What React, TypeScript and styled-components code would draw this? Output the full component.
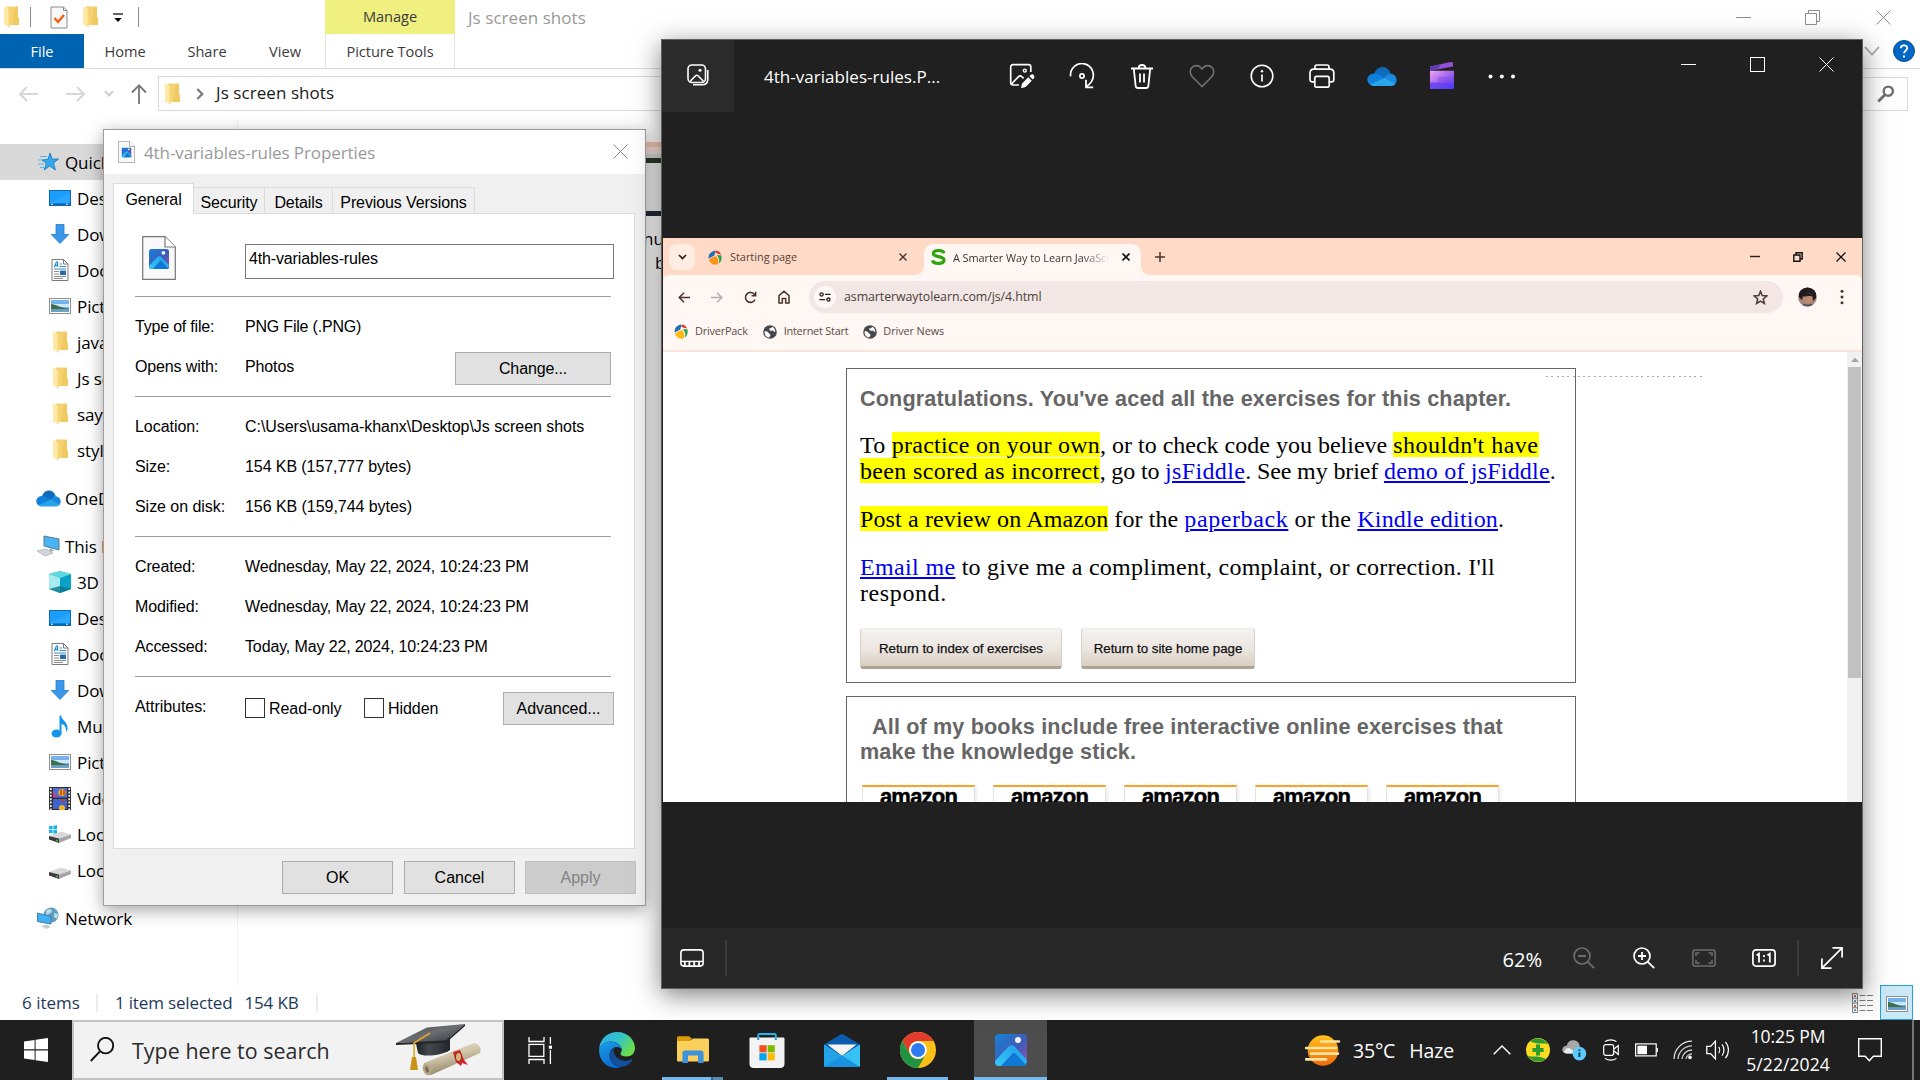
import React from "react";
import styled, { createGlobalStyle } from "styled-components";

const UI = `"Segoe UI", "Open Sans", "Noto Sans", sans-serif`;
const SANS = `"Liberation Sans", Arial, sans-serif`;
const SERIF = `"Liberation Serif", Georgia, serif`;

const Global = createGlobalStyle`
  * { box-sizing: border-box; }
  body { margin: 0; background: #fff; overflow: hidden; }
  svg { display: block; flex: none; }
`;

const Desktop = styled.div`
  position: relative;
  width: 1920px;
  height: 1080px;
  overflow: hidden;
  display: flex;
  flex-direction: column;
  font-family: ${UI};
  color: #000;
`;

const Label = styled.span<{ $size?: number; $ls?: number; $color?: string; $ml?: number; $mt?: number }>`
  font-size: ${(p) => p.$size ?? 17}px;
  letter-spacing: ${(p) => p.$ls ?? 0}px;
  color: ${(p) => p.$color ?? "inherit"};
  margin-left: ${(p) => p.$ml ?? 0}px;
  margin-top: ${(p) => p.$mt ?? 0}px;
  white-space: pre;
  line-height: 1.3;
  flex: none;
`;

const Slot = styled.div<{ $w: number; $h?: number; $ml?: number }>`
  width: ${(p) => p.$w}px;
  height: ${(p) => (p.$h ? p.$h + "px" : "100%")};
  margin-left: ${(p) => p.$ml ?? 0}px;
  display: flex;
  flex: none;
  align-items: center;
  justify-content: center;
`;

const Rule = styled.div<{ $h: number; $ml?: number; $color?: string; $w?: number }>`
  width: ${(p) => p.$w ?? 1}px;
  height: ${(p) => p.$h}px;
  margin-left: ${(p) => p.$ml ?? 0}px;
  background: ${(p) => p.$color ?? "#8a8a8a"};
  flex: none;
`;

/* ---------- icons ---------- */
type IP = { w: number; h: number; vb?: string; children: React.ReactNode };
const I = ({ w, h, vb, children }: IP) => (
  <svg width={w} height={h} viewBox={vb ?? `0 0 ${w} ${h}`} fill="none">
    {children}
  </svg>
);

const FolderIcon = () => (
  <I w={15} h={22}>
    <path d="M3 0.5H14V11L15 12V19H3Z" fill="#f6d370" />
    <path d="M11 1H14V11L15 12V19H8Z" fill="#e9c25a" opacity=".55" />
    <path d="M0 0.5L5.5 3.5V21.5L0 18.5Z" fill="#ffe9a6" />
    <path d="M5.5 3.5V21.5L4.6 21V3Z" fill="#f3cf72" />
  </I>
);
const CheckDoc = () => (
  <I w={18} h={23}>
    <path d="M1 1H13.5L17 4.5V22H1Z" fill="#f8f8f8" stroke="#8a8a8a" />
    <path d="M13.5 1V4.5H17" stroke="#8a8a8a" />
    <path d="M4.5 12L8 16L14 9" stroke="#f2600c" strokeWidth="2.4" />
  </I>
);
const StarIcon = () => (
  <I w={22} h={20}>
    <path d="M13 1L15.2 7H21.5L16.6 11L18.4 18L12.7 14L7.2 18L9.3 11.3L5 8L11 7.3Z" fill="#33a9ee" stroke="#1477bd" strokeWidth=".8" />
    <path d="M3 4.5H10M1 8H5M1 12H7M3 15.5H7" stroke="#5ab4ec" strokeWidth="1" />
  </I>
);
const DesktopIcon = () => (
  <I w={22} h={16}>
    <rect x=".5" y=".5" width="21" height="15" fill="#1a9dfb" stroke="#0c6ab3" />
    <path d="M1 13L21 3V13Z" fill="#3cb0ff" opacity=".5" />
    <path d="M1 14.2H21" stroke="#0b5fa5" strokeWidth="1.4" />
    <path d="M2 14.2H4M17 14.2H19" stroke="#fff" strokeWidth="1" />
  </I>
);
const DownIcon = () => (
  <I w={20} h={20}>
    <path d="M6 .5H14V10.5H18.8L10 19.5L1.2 10.5H6Z" fill="#3b97e8" stroke="#2b7bc9" strokeWidth=".8" />
  </I>
);
const DocIcon = () => (
  <I w={18} h={22}>
    <path d="M1 .5H12.5L17 5V21.5H1Z" fill="#fff" stroke="#7a7a7a" />
    <path d="M12.5 .5V5H17" stroke="#7a7a7a" />
    <path d="M3.4 8L5.4 3H6.6V8M4 6.4H6.6" stroke="#1e88d2" strokeWidth="1.1" />
    <path d="M8.5 5H11M8.5 7.5H15M3 10H15" stroke="#2f8fce" strokeWidth="1" />
    <path d="M3 12.5H8M3 15H8M3 17.5H15M3 19.5H12" stroke="#8c8c8c" strokeWidth="1" />
    <rect x="9" y="11.6" width="6" height="4.4" fill="#2a6aa9" />
  </I>
);
const PicIcon = () => (
  <I w={22} h={16}>
    <rect x=".5" y=".5" width="21" height="15" fill="#fff" stroke="#8e8e8e" />
    <rect x="2" y="2" width="18" height="12" fill="#74b3ee" />
    <rect x="2" y="6" width="18" height="3" fill="#cfe6f7" />
    <path d="M2 6C7 6 10 10 20 10.5V11.5H2Z" fill="#3f6f4e" />
    <path d="M2 11.3H20V14H2Z" fill="#6ba2c6" />
  </I>
);
const CloudIcon = ({ w = 25, h = 17 }: { w?: number; h?: number }) => (
  <I w={w} h={h} vb="0 0 25 17">
    <path d="M6 6.5C7 2.5 10 .5 13 .5C16.5 .5 18.8 3 19.6 6L12 12Z" fill="#0f6cbd" />
    <path d="M5.5 6C2.5 6.4 .3 8.5 .3 11.2C.3 13.6 2 15.6 4.5 16.2L15 10.5C12 7.5 9 5.7 5.5 6Z" fill="#1180dd" />
    <path d="M14 10C16 7 18 6 20 6.2C23 6.6 24.7 9 24.7 11.5C24.7 13 24 14.5 23 15.2Z" fill="#1a8ae0" />
    <path d="M3 15L14.5 9.8L23.6 14.6C22.8 16 21.5 16.5 20 16.5H5.5C4.5 16.5 3.6 16 3 15Z" fill="#2aa5ea" />
  </I>
);
const PCIcon = () => (
  <I w={23} h={22}>
    <path d="M7 1L22 4V15L7 11Z" fill="#46b4f5" stroke="#5d7b8f" />
    <path d="M13 13L17 16L12 17Z" fill="#98a5ad" />
    <path d="M0 16L9 14L16 18L8 21Z" fill="#cfd5d9" stroke="#9aa5ac" strokeWidth=".6" />
  </I>
);
const CubeIcon = () => (
  <I w={22} h={22}>
    <path d="M11 0L22 3V18L11 22L0 18V3Z" fill="#3fc7d6" />
    <path d="M0 3L11 7V22L0 18Z" fill="#a6ecf0" />
    <path d="M22 3L11 7V22L22 18Z" fill="#0ba1c5" />
    <path d="M11 15L22 18L11 22L0 18Z" fill="#08758c" opacity=".8" />
    <path d="M0 3L11 0L22 3L11 7Z" fill="#5fd7df" />
  </I>
);
const MusicIcon = () => (
  <I w={18} h={23}>
    <ellipse cx="5.5" cy="18.5" rx="5" ry="4" fill="#1296ec" />
    <path d="M8.5 18.5V.5H10C10.5 5 17 7 16.6 14C16 16 15.5 16.5 15 17C15.5 11.5 13 9.5 10.5 9V18.5Z" fill="#1296ec" />
  </I>
);
const VideoIcon = () => (
  <I w={22} h={23}>
    <rect width="22" height="23" fill="#2e2e2e" />
    <rect x="4" y="1" width="14" height="9.6" fill="#4e6fd6" />
    <rect x="4" y="12" width="14" height="10" fill="#3e63cf" />
    <circle cx="13" cy="5.5" r="3.6" fill="#f3b51d" />
    <path d="M12 2.5V8.5M15 3V8" stroke="#b0231c" strokeWidth="1.2" />
    <path d="M4 4L9 10H4Z" fill="#d13c8e" />
    <path d="M14 15L17 12.6H11Z" fill="#cf3a1d" />
    <circle cx="13" cy="21" r="3" fill="#f3b51d" />
    <path d="M1.8 1V23M20.2 1V23" stroke="#e8e8e8" strokeWidth="1.8" strokeDasharray="2 1.4" />
  </I>
);
const DriveIcon = ({ win }: { win?: boolean }) => (
  <I w={22} h={18}>
    {win && <path d="M0 1.2L3.6 .8V4.2H0ZM4.4 .7L8 .2V4.2H4.4ZM0 5H3.6V8.3L0 8ZM4.4 5H8V8.8L4.4 8.4Z" fill="#17b1ee" />}
    <path d="M0 11L12 6.5L22 9.5L10 13.5Z" fill="#d8d8da" />
    <path d="M0 11L10 13.5V18L0 14.5Z" fill="#3c3c3c" />
    <path d="M10 13.5L22 9.5V13L10 18Z" fill="#a6a6a9" />
    <circle cx="8" cy="15.6" r="1" fill="#42c24a" />
  </I>
);
const NetIcon = () => (
  <I w={22} h={22}>
    <circle cx="14" cy="8" r="7.6" fill="#5e9dc0" />
    <path d="M9 4C11 1 14 2 15 4C14 7 11 6 10 9ZM17 6L21 7L20 12L17 10Z" fill="#b9dcec" />
    <path d="M.5 6L14 9.5V17L.5 14.5Z" fill="#3eb0f6" stroke="#4a7f9f" />
    <path d="M4 19L10 17.5L14 20L9 22Z" fill="#c5ccd0" />
  </I>
);

const XMark = ({ s, color, sw = 1 }: { s: number; color: string; sw?: number }) => (
  <I w={s} h={s}>
    <path d={`M.5 .5L${s - 0.5} ${s - 0.5}M${s - 0.5} .5L.5 ${s - 0.5}`} stroke={color} strokeWidth={sw} />
  </I>
);
const Dash = ({ w, color, sw = 1 }: { w: number; color: string; sw?: number }) => (
  <I w={w} h={3}>
    <path d={`M0 1.5H${w}`} stroke={color} strokeWidth={sw} />
  </I>
);

const PhotoGlyph = ({ s, id }: { s: number; id: string }) => (
  <I w={s} h={s} vb="0 0 32 32">
    <defs>
      <linearGradient id={id} x1="0" y1="0" x2="1" y2="1">
        <stop offset="0" stopColor="#1583d8" />
        <stop offset=".55" stopColor="#3f5bb8" />
        <stop offset="1" stopColor="#9a4fb4" />
      </linearGradient>
      <linearGradient id={id + "b"} x1="0" y1="1" x2="1" y2="0">
        <stop offset="0" stopColor="#35c8fa" />
        <stop offset="1" stopColor="#1e9be9" />
      </linearGradient>
      <clipPath id={id + "c"}>
        <rect width="32" height="32" rx="4" />
      </clipPath>
    </defs>
    <g clipPath={`url(#${id}c)`}>
      <rect width="32" height="32" fill={`url(#${id})`} />
      <path d="M6 32L21 16L33 28V32Z" fill="#0f78d4" />
      <path d="M0 27L13 13C15.5 10.5 18 10.5 20 13L33 27L30 30L21 20C20 18.5 18 18.5 17 20L6 32H0Z" fill={`url(#${id}b)`} />
      <circle cx="23" cy="6" r="3" fill="#f4f4f8" />
    </g>
  </I>
);

const FileGlyph = ({ w, h, id }: { w: number; h: number; id: string }) => (
  <I w={w} h={h} vb="0 0 34 44">
    <path d="M.7 .7H23L33.3 11V43.3H.7Z" fill="#f9f9f9" stroke="#777" strokeWidth="1.2" />
    <path d="M23 .7V11H33.3" fill="#fff" stroke="#777" strokeWidth="1.2" />
    <g transform="translate(7 13)">
      <PhotoGlyph s={20} id={id} />
    </g>
  </I>
);

/* ---------- file explorer ---------- */
const Explorer = styled.div`
  height: 1020px;
  width: 1920px;
  display: flex;
  flex-direction: column;
  background: #fff;
`;
const RibbonTop = styled.div`
  height: 69px;
  display: flex;
  border-bottom: 1px solid #dadbdc;
`;
const RibbonLeft = styled.div`
  width: 325px;
  display: flex;
  flex-direction: column;
`;
const QuickBar = styled.div`
  height: 34px;
  display: flex;
  align-items: center;
  padding: 0 0 0 4px;
`;
const Tabs = styled.div`
  height: 34px;
  display: flex;
  align-items: center;
  font-size: 14.6px;
  color: #3b3b3b;
`;
const FileTab = styled.div`
  width: 84px;
  height: 34px;
  line-height: 34px;
  text-align: center;
  background: #0063b1;
  color: #fff;
`;
const Tab = styled.div<{ $w: number }>`
  width: ${(p) => p.$w}px;
  text-align: center;
  line-height: 34px;
`;
const ToolTab = styled.div`
  width: 130px;
  text-align: center;
  font-size: 14.6px;
  letter-spacing: -0.05px;
  color: #3b3b3b;
  line-height: 33px;
`;
const ToolHead = styled.div`
  height: 34px;
  background: #f0f080;
`;
const ToolName = styled.div`
  height: 34px;
  line-height: 34px;
  border: solid #e1e2e3;
  border-width: 0 1px;
`;
const TitleArea = styled.div`
  flex: 1;
  display: flex;
  flex-direction: column;
`;
const TitleLine = styled.div`
  height: 34px;
  display: flex;
  align-items: center;
  justify-content: space-between;
  padding: 0 1px 0 13px;
`;
const Controls = styled.div`
  display: flex;
  height: 33px;
`;
const HelpLine = styled.div`
  height: 34px;
  display: flex;
  align-items: center;
  justify-content: flex-end;
  gap: 13px;
  padding-right: 5px;
`;
const AddressRow = styled.div`
  height: 51px;
  display: flex;
  align-items: center;
  padding: 0 12px 2px 19px;
`;
const AddressBox = styled.div`
  margin-left: 11px;
  width: 1200px;
  height: 35px;
  border: 1px solid #d9d9d9;
  display: flex;
  align-items: center;
  padding-left: 6px;
`;
const SearchBox = styled.div`
  flex: 1;
  margin-left: 12px;
  height: 34px;
  border: 1px solid #d9d9d9;
  display: flex;
  align-items: center;
  justify-content: flex-end;
  padding-right: 12px;
`;
const Body = styled.div`
  flex: 1;
  display: flex;
  min-height: 0;
`;
const NavPane = styled.div`
  width: 238px;
  height: 865px;
  border-right: 1px solid #f0f0f0;
  padding-top: 24px;
  display: flex;
  flex-direction: column;
  gap: 12px;
`;
const NavGroup = styled.div``;
const NavItem = styled.div<{ $sub?: boolean; $sel?: boolean }>`
  height: 36px;
  display: flex;
  align-items: center;
  padding-left: ${(p) => (p.$sub ? 45 : 33)}px;
  background: ${(p) => (p.$sel ? "#d9d9d9" : "transparent")};
  font-size: 17px;
  letter-spacing: -0.1px;
  white-space: nowrap;
`;
const NavIcon = styled.div`
  width: 30px;
  margin-right: 2px;
  display: flex;
  justify-content: center;
`;
const FilePane = styled.div`
  flex: 1;
  padding: 22px 0 0 405px;
`;
const Thumb = styled.div`
  width: 60px;
  height: 74px;
  background: linear-gradient(#f9cbb3 0 5px, #f8e3df 5px 12px, #d5dcd6 12px 16px, #2c3a28 16px 21px, #f2f2f2 21px 69px, #222b33 69px 74px);
`;
const ThumbName = styled.div`
  font-size: 17px;
  line-height: 24px;
  padding-top: 11px;
  width: 60px;
`;
const ThumbTail = styled.div`
  padding-left: 12px;
`;
const StatusBar = styled.div`
  height: 35px;
  display: flex;
  align-items: center;
  padding: 0 7px 0 22px;
  color: #1e395b;
`;
const ViewButtons = styled.div`
  margin-left: auto;
  display: flex;
  align-items: center;
  gap: 7px;
`;
const ViewSelected = styled.div`
  width: 33px;
  height: 35px;
  border: 1px solid #26a0da;
  background: #cbe8f6;
  display: flex;
  justify-content: flex-end;
  align-items: center;
  padding: 3px 4px 0 0;
`;

const nav: { items: [string, React.ReactNode, boolean?][] }[] = [
  {
    items: [
      ["Quick access", <StarIcon />],
      ["Desktop", <DesktopIcon />, true],
      ["Downloads", <DownIcon />, true],
      ["Documents", <DocIcon />, true],
      ["Pictures", <PicIcon />, true],
      ["javascript", <FolderIcon />, true],
      ["Js screen shots", <FolderIcon />, true],
      ["say", <FolderIcon />, true],
      ["style", <FolderIcon />, true],
    ],
  },
  { items: [["OneDrive", <CloudIcon />]] },
  {
    items: [
      ["This PC", <PCIcon />],
      ["3D Objects", <CubeIcon />, true],
      ["Desktop", <DesktopIcon />, true],
      ["Documents", <DocIcon />, true],
      ["Downloads", <DownIcon />, true],
      ["Music", <MusicIcon />, true],
      ["Pictures", <PicIcon />, true],
      ["Videos", <VideoIcon />, true],
      ["Local Disk", <DriveIcon win />, true],
      ["Local Disk", <DriveIcon />, true],
    ],
  },
  { items: [["Network", <NetIcon />]] },
];

const ExplorerWindow = () => (
  <Explorer>
    <RibbonTop>
      <RibbonLeft>
        <QuickBar>
          <FolderIcon />
          <Rule $h={20} $ml={11} />
          <Slot $w={18} $ml={19}><CheckDoc /></Slot>
          <Slot $w={15} $ml={15}><FolderIcon /></Slot>
          <Slot $w={10} $ml={15}>
            <I w={10} h={10}>
              <path d="M0 2H10" stroke="#222" strokeWidth="1.4" />
              <path d="M1.3 6H8.7L5 10Z" fill="#000" />
            </I>
          </Slot>
          <Rule $h={20} $ml={15} />
        </QuickBar>
        <Tabs>
          <FileTab>File</FileTab>
          <Tab $w={82}>Home</Tab>
          <Tab $w={82}>Share</Tab>
          <Tab $w={74}>View</Tab>
        </Tabs>
      </RibbonLeft>
      <ToolTab>
        <ToolHead>Manage</ToolHead>
        <ToolName>Picture Tools</ToolName>
      </ToolTab>
      <TitleArea>
        <TitleLine>
          <Label $size={17} $mt={2} $ls={0.05} $color="#999">Js screen shots</Label>
          <Controls>
            <Slot $w={69}><Dash w={15} color="#8d8d8d" /></Slot>
            <Slot $w={69}>
              <I w={15} h={15}>
                <path d="M.5 3.5H11.5V14.5H.5ZM3.5 3.5V.5H14.5V11.5H11.5" stroke="#8d8d8d" />
              </I>
            </Slot>
            <Slot $w={72}><XMark s={15} color="#8d8d8d" /></Slot>
          </Controls>
        </TitleLine>
        <HelpLine>
          <I w={16} h={10}><path d="M1 1L8 8.5L15 1" stroke="#a8a8a8" strokeWidth="1.8" /></I>
          <I w={22} h={22}>
            <circle cx="11" cy="11" r="10.5" fill="#0067c5" stroke="#0a4c92" />
            <path d="M7.8 8.3C7.8 4.4 14.2 4.4 14.2 8.2C14.2 10.6 11 10.7 11 13.3M11 15.4V17.4" stroke="#fff" strokeWidth="1.9" />
          </I>
        </HelpLine>
      </TitleArea>
    </RibbonTop>
    <AddressRow>
      <I w={20} h={16}><path d="M19 8H1M8 1L1 8L8 15" stroke="#d8d8d8" strokeWidth="2" /></I>
      <Slot $w={20} $ml={26}>
        <I w={20} h={16}><path d="M1 8H19M12 1L19 8L12 15" stroke="#d8d8d8" strokeWidth="2" /></I>
      </Slot>
      <Slot $w={10} $ml={19}>
        <I w={10} h={7}><path d="M1 1L5 5.4L9 1" stroke="#d0d0d0" strokeWidth="2" /></I>
      </Slot>
      <Slot $w={16} $ml={17}>
        <I w={16} h={20}><path d="M8 20V1.4M1 8.5L8 1.4L15 8.5" stroke="#767676" strokeWidth="1.8" /></I>
      </Slot>
      <AddressBox>
        <FolderIcon />
        <Slot $w={8} $ml={16}>
          <I w={8} h={12}><path d="M1.3 1L6.3 6L1.3 11" stroke="#7a7a7a" strokeWidth="2.2" /></I>
        </Slot>
        <Label $ml={12} $size={17} $ls={0.07} $color="#1a1a1a">Js screen shots</Label>
      </AddressBox>
      <SearchBox>
        <I w={18} h={18}>
          <circle cx="11.3" cy="6.2" r="4.6" stroke="#707070" strokeWidth="2.4" />
          <path d="M8 9.8L1.2 16.6" stroke="#707070" strokeWidth="2.8" />
        </I>
      </SearchBox>
    </AddressRow>
    <Body>
      <NavPane>
        {nav.map((g, gi) => (
          <NavGroup key={gi}>
            {g.items.map(([text, icon, sub], i) => (
              <NavItem key={i} $sub={sub} $sel={gi === 0 && i === 0}>
                <NavIcon>{icon}</NavIcon>
                {text}
              </NavItem>
            ))}
          </NavGroup>
        ))}
      </NavPane>
      <FilePane>
        <Thumb />
        <ThumbName>
          num
          <ThumbTail>ber</ThumbTail>
        </ThumbName>
      </FilePane>
    </Body>
    <StatusBar>
      <Label $size={17} $mt={2}>6 items</Label>
      <Rule $h={18} $ml={16} $color="#ececec" $w={2} />
      <Label $size={17} $mt={2} $ls={-0.15} $ml={17}>1 item selected</Label>
      <Label $size={17} $mt={2} $ls={-0.15} $ml={12}>154 KB</Label>
      <Rule $h={18} $ml={17} $color="#ececec" $w={2} />
      <ViewButtons>
        <I w={21} h={20}>
          <rect x=".5" y=".5" width="5" height="19" fill="#fff" stroke="#8a8a8a" />
          <path d="M0 5.2H6M0 10H6M0 14.8H6M7.5 2.5H13.5M15 2.5H21M7.5 7.5H13.5M15 7.5H21M7.5 12.5H13.5M15 12.5H21M7.5 17.5H13.5M15 17.5H21" stroke="#7c7c7c" />
          <path d="M2 3H4M2 13H4" stroke="#c03a2b" strokeWidth="1.6" />
          <path d="M2 8H4M2 17.3H4" stroke="#3d7fae" strokeWidth="1.6" />
        </I>
        <ViewSelected><PicIcon /></ViewSelected>
      </ViewButtons>
    </StatusBar>
  </Explorer>
);

/* ---------- properties dialog ---------- */
const Dialog = styled.div`
  position: absolute;
  left: 103px;
  top: 129px;
  width: 543px;
  height: 777px;
  border: 1px solid #9d9d9d;
  background: #f0f0f0;
  box-shadow: 0 4px 16px rgba(0, 0, 0, 0.36);
  font-family: ${SANS};
  font-size: 16px;
  display: flex;
  flex-direction: column;
`;
const DialogTitle = styled.div`
  height: 44px;
  background: #fff;
  display: flex;
  align-items: center;
  padding: 0 17px 0 14px;
  font-family: ${UI};
`;
const DialogClose = styled.div`
  margin-left: auto;
  margin-top: -1px;
`;
const DialogTabs = styled.div`
  height: 40px;
  padding-left: 9px;
  display: flex;
  align-items: flex-end;
  margin-bottom: -1px;
  position: relative;
`;
const DialogTab = styled.div<{ $w: number; $on?: boolean }>`
  width: ${(p) => p.$w}px;
  height: ${(p) => (p.$on ? 31 : 27)}px;
  line-height: ${(p) => (p.$on ? 31 : 29)}px;
  text-align: center;
  border: 1px solid #dcdcdc;
  border-left-width: ${(p) => (p.$on ? 1 : 0)}px;
  border-bottom-color: ${(p) => (p.$on ? "#fff" : "#dcdcdc")};
  background: ${(p) => (p.$on ? "#fff" : "#f0f0f0")};
  letter-spacing: -0.1px;
`;
const Panel = styled.div`
  margin-left: 9px;
  width: 522px;
  height: 636px;
  background: #fff;
  border: 1px solid #dcdcdc;
  padding-left: 21px;
`;
const NameRow = styled.div`
  height: 82px;
  display: flex;
  padding: 22px 0 0 7px;
`;
const NameInput = styled.div`
  margin: 8px 0 0 69px;
  width: 369px;
  height: 35px;
  border: 1px solid #7a7a7a;
  padding-left: 3px;
  line-height: 28px;
  letter-spacing: -0.15px;
`;
const Section = styled.div`
  width: 476px;
  border-top: 1px solid #a0a0a0;
  padding: 9px 0 10px;
`;
const Row = styled.div<{ $ls?: number }>`
  height: 40px;
  display: grid;
  grid-template-columns: 110px 1fr;
  line-height: 42px;
  white-space: nowrap;
  letter-spacing: ${(p) => p.$ls ?? -0.13}px;
`;
const Value = styled.div`
  display: flex;
`;
const PushButton = styled.div<{ $w: number; $ml?: number; $mt?: number; $off?: boolean }>`
  width: ${(p) => p.$w}px;
  height: 33px;
  line-height: 31px;
  margin-left: ${(p) => p.$ml ?? 0}px;
  margin-top: ${(p) => p.$mt ?? 0}px;
  text-align: center;
  border: 1px solid ${(p) => (p.$off ? "#bfbfbf" : "#adadad")};
  background: ${(p) => (p.$off ? "#cccccc" : "#e1e1e1")};
  color: ${(p) => (p.$off ? "#838383" : "#000")};
  flex: none;
`;
const CheckBox = styled.div`
  width: 20px;
  height: 20px;
  border: 1px solid #333;
  margin: 12px 4px 0 0;
  flex: none;
`;
const CheckLabel = styled.div<{ $w: number }>`
  width: ${(p) => p.$w}px;
  line-height: 45px;
  letter-spacing: -0.05px;
`;
const DialogFooter = styled.div`
  padding: 12px 0 0 178px;
  display: flex;
  gap: 11px;
`;

const PropertiesDialog = () => (
  <Dialog>
    <DialogTitle>
      <FileGlyph w={17} h={22} id="dlgA" />
      <Label $ml={9} $mt={2} $size={17} $ls={-0.1} $color="#999">4th-variables-rules Properties</Label>
      <DialogClose><XMark s={15} color="#8a8a8a" /></DialogClose>
    </DialogTitle>
    <DialogTabs>
      <DialogTab $w={81} $on>General</DialogTab>
      <DialogTab $w={71}>Security</DialogTab>
      <DialogTab $w={68}>Details</DialogTab>
      <DialogTab $w={142}>Previous Versions</DialogTab>
    </DialogTabs>
    <Panel>
      <NameRow>
        <FileGlyph w={34} h={44} id="dlgB" />
        <NameInput>4th-variables-rules</NameInput>
      </NameRow>
      <Section>
        <Row $ls={-0.2}><div>Type of file:</div><Value>PNG File (.PNG)</Value></Row>
        <Row>
          <div>Opens with:</div>
          <Value>
            Photos
            <PushButton $w={156} $ml={161} $mt={6}>Change...</PushButton>
          </Value>
        </Row>
      </Section>
      <Section>
        <Row $ls={-0.05}><div>Location:</div><Value>C:\Users\usama-khanx\Desktop\Js screen shots</Value></Row>
        <Row $ls={-0.08}><div>Size:</div><Value>154 KB (157,777 bytes)</Value></Row>
        <Row $ls={-0.05}><div>Size on disk:</div><Value>156 KB (159,744 bytes)</Value></Row>
      </Section>
      <Section>
        <Row><div>Created:</div><Value>Wednesday, May 22, 2024, 10:24:23 PM</Value></Row>
        <Row><div>Modified:</div><Value>Wednesday, May 22, 2024, 10:24:23 PM</Value></Row>
        <Row><div>Accessed:</div><Value>Today, May 22, 2024, 10:24:23 PM</Value></Row>
      </Section>
      <Section>
        <Row $ls={-0.05}>
          <div>Attributes:</div>
          <Value>
            <CheckBox /><CheckLabel $w={95}>Read-only</CheckLabel>
            <CheckBox /><CheckLabel $w={115}>Hidden</CheckLabel>
            <PushButton $w={111} $mt={6}>Advanced...</PushButton>
          </Value>
        </Row>
      </Section>
    </Panel>
    <DialogFooter>
      <PushButton $w={111}>OK</PushButton>
      <PushButton $w={111}>Cancel</PushButton>
      <PushButton $w={111} $ml={-1} $off>Apply</PushButton>
    </DialogFooter>
  </Dialog>
);

/* ---------- photos viewer ---------- */
const Photos = styled.div`
  position: absolute;
  left: 661px;
  top: 39px;
  width: 1202px;
  height: 950px;
  border: 1px solid #606060;
  background: #202020;
  box-shadow: 0 6px 24px rgba(0, 0, 0, 0.5);
  display: flex;
  flex-direction: column;
`;
const PhotosBar = styled.div`
  height: 72px;
  display: flex;
  color: #fff;
`;
const GalleryTile = styled.div`
  width: 72px;
  height: 72px;
  background: #2b2b2b;
  display: flex;
  align-items: center;
  justify-content: center;
  padding-bottom: 2px;
`;
const FileName = styled.div`
  width: 258px;
  padding-left: 30px;
  line-height: 73px;
  font-size: 17px;
  letter-spacing: 0.03px;
`;
const PhotoControls = styled.div`
  margin-left: auto;
  height: 49px;
  display: flex;
  padding-right: 1px;
`;
const Stage = styled.div`
  flex: 1;
  padding: 126px 0 0 1px;
`;
const PhotosFooter = styled.div`
  height: 60px;
  background: #282828;
  display: flex;
  align-items: center;
  color: #fff;
`;
const FooterRight = styled.div`
  margin-left: auto;
  height: 60px;
  display: flex;
  align-items: center;
`;

/* picture content: a browser page */
const Browser = styled.div`
  width: 1199px;
  height: 564px;
  overflow: hidden;
  background: #fff;
  display: flex;
  flex-direction: column;
`;
const TabStrip = styled.div`
  height: 37px;
  background: #ffdac7;
  display: flex;
  padding: 6px 0 0 6px;
  font-size: 10.9px;
  color: #5a4238;
`;
const TabSearch = styled.div`
  width: 26px;
  height: 26px;
  border-radius: 8px;
  background: #ffede4;
  display: flex;
  align-items: center;
  justify-content: center;
`;
const IdleTab = styled.div`
  width: 229px;
  height: 26px;
  display: flex;
  align-items: center;
  padding-left: 13px;
`;
const LiveTab = styled.div`
  position: relative;
  width: 217px;
  height: 31px;
  background: #fff7f4;
  border-radius: 9px 9px 0 0;
  display: flex;
  align-items: center;
  padding: 0 0 5px 7px;
  &::before,
  &::after {
    content: "";
    position: absolute;
    bottom: 0;
    width: 8px;
    height: 8px;
  }
  &::before {
    left: -8px;
    background: radial-gradient(circle at 0 0, transparent 7.5px, #fff7f4 8px);
  }
  &::after {
    right: -8px;
    background: radial-gradient(circle at 100% 0, transparent 7.5px, #fff7f4 8px);
  }
`;
const FadedTitle = styled.div`
  width: 157px;
  margin-left: 7px;
  overflow: hidden;
  white-space: nowrap;
  letter-spacing: -0.05px;
  color: transparent;
  background: linear-gradient(90deg, #3c2b24 82%, #fff7f4 100%);
  background-clip: text;
  -webkit-background-clip: text;
`;
const StripControls = styled.div`
  margin-left: auto;
  height: 25px;
  display: flex;
`;
const Toolbar = styled.div`
  height: 44px;
  background: #fff7f4;
  border-radius: 6px 6px 0 0;
  display: flex;
  align-items: center;
  padding-left: 4px;
`;
const ToolbarWrap = styled.div`
  background: #ffdac7;
`;
const Omnibox = styled.div`
  width: 974px;
  height: 32px;
  border-radius: 16px;
  background: #f2e7e4;
  display: flex;
  align-items: center;
  margin-left: 8px;
  padding: 0 15px 0 5px;
`;
const SiteChip = styled.div`
  width: 22px;
  height: 22px;
  border-radius: 50%;
  background: #fff7f4;
  display: flex;
  align-items: center;
  justify-content: center;
`;
const OmniEnd = styled.div`
  margin-left: auto;
`;
const Bookmarks = styled.div`
  height: 33px;
  background: #fff7f4;
  border-bottom: 2px solid #f8e5dc;
  display: flex;
  align-items: center;
  padding: 0 0 6px 11px;
  color: #5d4a42;
`;
const Page = styled.div`
  flex: 1;
  display: flex;
  min-height: 0;
`;
const PageMain = styled.div`
  position: relative;
  flex: 1;
  padding: 16px 0 0 183px;
`;
const Card = styled.div<{ $h: number }>`
  width: 730px;
  height: ${(p) => p.$h}px;
  border: 1px solid #666;
  padding: 17px 0 0 13px;
  margin-bottom: 13px;
`;
const Heading = styled.div<{ $indent?: number }>`
  font: bold 21.6px/25px ${SANS};
  letter-spacing: 0.15px;
  padding-left: ${(p) => p.$indent ?? 0}px;
  color: #666;
  white-space: nowrap;
`;
const Para = styled.div<{ $mt?: number }>`
  margin-top: ${(p) => p.$mt ?? 22}px;
  font: 24px/26px ${SERIF};
  color: #000;
`;
const Line = styled.div`
  white-space: pre;
  height: 26px;
`;
const Run = styled.span<{ $ls?: number }>`
  letter-spacing: ${(p) => p.$ls ?? 0.2}px;
`;
const Mark = styled(Run)`
  background: #ff0;
  display: inline-block;
  height: 25px;
  line-height: 26px;
`;
const Link = styled(Run)`
  color: #0000ee;
  text-decoration: underline;
  text-decoration-thickness: 1.5px;
  text-underline-offset: 2px;
`;
const PageButtons = styled.div`
  display: flex;
  gap: 19px;
  margin-top: 22px;
`;
const PageButton = styled.div<{ $w: number }>`
  width: ${(p) => p.$w}px;
  height: 41px;
  border-radius: 3px;
  border: 1px solid #d8d0c8;
  border-top-color: #efebe8;
  border-bottom: 3px solid #b0a293;
  background: linear-gradient(#f5f2f0, #ece6e1 55%, #d8cdc1);
  text-align: center;
  font: 13.3px/40px ${SANS};
  letter-spacing: -0.03px;
  white-space: nowrap;
  color: #111;
  -webkit-text-stroke: 0.25px #111;
`;
const Shops = styled.div`
  display: flex;
  gap: 18px;
  margin: 21px 0 0 2px;
`;
const Shop = styled.div`
  width: 113px;
  height: 40px;
  border: 1px solid #e2e2e2;
  border-top: 2px solid #f9a32a;
  box-shadow: 2px 0 3px #eee;
  font: bold 22px/19px ${SANS};
  letter-spacing: -0.8px;
  text-align: center;
  -webkit-text-stroke: 0.5px #000;
`;
const DotTrail = styled.div`
  position: absolute;
  left: 883px;
  top: 24px;
  width: 157px;
  height: 1px;
  background: repeating-linear-gradient(90deg, #aaa 0 2px, transparent 2px 5.3px);
`;
const ScrollTrack = styled.div`
  width: 15px;
  background: #f1f1f1;
  display: flex;
  flex-direction: column;
  align-items: center;
`;
const ScrollThumb = styled.div`
  width: 13px;
  height: 311px;
  background: #c1c1c1;
`;

const BallIcon = ({ y = "#f7941d" }: { y?: string }) => (
  <I w={14} h={15}>
    <path d="M.6 8.6C0 4.5 2.8 1 7.4 .4L6.4 5.6Z" fill="#1f6fb8" />
    <path d="M7.9 .4C10.5 .6 12.4 2.4 13 4.4L10.4 4L7 2.6Z" fill="#e2392e" />
    <path d="M13.4 5.2C14.2 9 13 12 10.6 13.8C12 10 11 7 8.5 5.2Z" fill="#2ca24c" />
    <path d="M.8 9.4C3.4 7.6 6.4 6 8 6.2C10.4 7.8 10.8 11 9.8 14.2C6 15.6 1.8 13.6 .8 9.4Z" fill={y} />
  </I>
);
const GlobeIcon = () => (
  <I w={14} h={14}>
    <circle cx="7" cy="7" r="6.8" fill="#44474c" />
    <path d="M1.6 6.4C3.5 6.2 5 6.6 5.6 8C6.2 9 7.6 8.8 7.4 10.6C7.2 11.6 6.4 11.8 6.4 12.6C3.6 12.4 1.3 10 1.6 6.4ZM6.2 3.2C7.4 3.6 9 3 9 1.8C11 2.6 12.4 4.4 12.4 6.6C11.4 6.8 10.4 6.4 10 5.4C9 5.8 7.4 6 6.6 5.2Z" fill="#fff7f4" />
  </I>
);
const RestoreSmall = () => (
  <I w={10} h={10}>
    <path d="M.8 3H7V9.2H.8ZM3 3V.8H9.2V7H7" stroke="#111" strokeWidth="1.4" />
  </I>
);

const BrowserPicture = () => (
  <Browser>
    <TabStrip>
      <TabSearch>
        <I w={9} h={6}><path d="M1 1L4.5 4.5L8 1" stroke="#2a1d17" strokeWidth="1.7" /></I>
      </TabSearch>
      <IdleTab>
        <BallIcon />
        <Label $size={10.9} $mt={1} $ml={8}>Starting page</Label>
        <Slot $w={8} $ml={102}><XMark s={8} color="#4a342a" sw={1.4} /></Slot>
      </IdleTab>
      <LiveTab>
        <I w={15} h={16}>
          <path d="M13 4.2C12 .6 2.4 .5 2.4 4.6C2.4 8.8 13 6.4 13 11C13 15.6 2.2 15.4 1.6 11.2" stroke="#2fa40e" strokeWidth="3.2" />
        </I>
        <FadedTitle>A Smarter Way to Learn JavaScript</FadedTitle>
        <Slot $w={8} $ml={12}><XMark s={8} color="#111" sw={1.6} /></Slot>
      </LiveTab>
      <Slot $w={10} $ml={14} $h={25}>
        <I w={10} h={10}><path d="M5 0V10M0 5H10" stroke="#4a342a" strokeWidth="1.5" /></I>
      </Slot>
      <StripControls>
        <Slot $w={43}><Dash w={10} color="#222" sw={1.4} /></Slot>
        <Slot $w={43}><RestoreSmall /></Slot>
        <Slot $w={43}><XMark s={10} color="#111" sw={1.3} /></Slot>
      </StripControls>
    </TabStrip>
    <ToolbarWrap>
      <Toolbar>
        <Slot $w={33}><I w={12} h={11}><path d="M12 5.5H1.2M6 .8L1.2 5.5L6 10.2" stroke="#4a342a" strokeWidth="1.5" /></I></Slot>
        <Slot $w={33}><I w={12} h={11}><path d="M0 5.5H10.8M6 .8L10.8 5.5L6 10.2" stroke="#b9aaa4" strokeWidth="1.5" /></I></Slot>
        <Slot $w={34}><I w={13} h={13}><path d="M11 8.5A5 5 0 1 1 10.6 3.6M11.6 .8V4.8H7.6" stroke="#4a342a" strokeWidth="1.6" /></I></Slot>
        <Slot $w={34}><I w={12} h={14}><path d="M1 5.6L6 1.2L11 5.6V13H7.7V8.4H4.3V13H1Z" stroke="#4a342a" strokeWidth="1.5" /></I></Slot>
        <Omnibox>
          <SiteChip>
            <I w={12} h={10}>
              <circle cx="2.6" cy="2.4" r="1.6" stroke="#222" strokeWidth="1.3" />
              <path d="M6 2.4H11.6M.4 7.6H6" stroke="#222" strokeWidth="1.4" />
              <circle cx="9.4" cy="7.6" r="1.6" stroke="#222" strokeWidth="1.3" />
            </I>
          </SiteChip>
          <Label $size={12.4} $ls={-0.08} $mt={1} $ml={8} $color="#4a3f3b">asmarterwaytolearn.com/js/4.html</Label>
          <OmniEnd>
            <I w={15} h={15}>
              <path d="M7.5 1.3L9.2 5.6L13.8 6L10.3 9L11.4 13.5L7.5 11.1L3.6 13.5L4.7 9L1.2 6L5.8 5.6Z" stroke="#4a3a36" strokeWidth="1.5" />
            </I>
          </OmniEnd>
        </Omnibox>
        <Slot $w={19} $ml={15}>
          <I w={19} h={20}>
            <defs>
              <clipPath id="avatar"><ellipse cx="9.5" cy="10" rx="9.4" ry="9.6" /></clipPath>
            </defs>
            <g clipPath="url(#avatar)">
              <rect width="19" height="20" fill="#a5867c" />
              <path d="M1 10C0 4 4 0 9.5 0C16 0 19 4 18 11L15 14L14 9H5L4 13Z" fill="#1f1b20" />
              <ellipse cx="10.2" cy="11" rx="4.4" ry="5.2" fill="#bd8a70" />
              <path d="M5 9.4C7 5 13 5 15 9.6C12 8 9 9.6 5 9.4Z" fill="#1f1b20" />
              <path d="M2 20C4 15.4 8 16.6 10 17.4C12 16.6 15 15.6 17 20Z" fill="#5d5864" />
            </g>
          </I>
        </Slot>
        <Slot $w={4} $ml={23}>
          <I w={4} h={16}>
            <circle cx="2" cy="2.2" r="1.5" fill="#4a342a" />
            <circle cx="2" cy="8" r="1.5" fill="#4a342a" />
            <circle cx="2" cy="13.8" r="1.5" fill="#4a342a" />
          </I>
        </Slot>
      </Toolbar>
    </ToolbarWrap>
    <Bookmarks>
      <BallIcon y="#fbb917" />
      <Label $size={10.9} $ls={-0.2} $ml={7}>DriverPack</Label>
      <Slot $w={14} $ml={15}><GlobeIcon /></Slot>
      <Label $size={10.9} $ls={-0.23} $ml={7}>Internet Start</Label>
      <Slot $w={14} $ml={15}><GlobeIcon /></Slot>
      <Label $size={10.9} $ls={-0.1} $ml={6}>Driver News</Label>
    </Bookmarks>
    <Page>
      <PageMain>
        <Card $h={315}>
          <Heading>Congratulations. You've aced all the exercises for this chapter.</Heading>
          <Para $mt={21}>
            <Line>
              <Run $ls={0.25}>To </Run>
              <Mark $ls={0.25}>practice on your own</Mark>
              <Run $ls={0}>, or to check code you believe </Run>
              <Mark $ls={0.5}>shouldn't have</Mark>
            </Line>
            <Line>
              <Mark $ls={0.35}>been scored as incorrect</Mark>
              <Run $ls={-0.15}>, go to </Run>
              <Link $ls={0.35}>jsFiddle</Link>
              <Run $ls={-0.13}>. See my brief </Run>
              <Link>demo of jsFiddle</Link>.
            </Line>
          </Para>
          <Para>
            <Line>
              <Mark $ls={0.13}>Post a review on Amazon</Mark>
              <Run $ls={0.08}> for the </Run>
              <Link $ls={0.6}>paperback</Link>
              <Run> or the </Run>
              <Link>Kindle edition</Link>.
            </Line>
          </Para>
          <Para>
            <Line>
              <Link $ls={0.35}>Email me</Link>
              <Run $ls={0.25}> to give me a compliment, complaint, or correction. I'll</Run>
            </Line>
            <Line><Run $ls={0.6}>respond.</Run></Line>
          </Para>
          <PageButtons>
            <PageButton $w={202}>Return to index of exercises</PageButton>
            <PageButton $w={174}>Return to site home page</PageButton>
          </PageButtons>
        </Card>
        <Card $h={200}>
          <Heading $indent={12}>All of my books include free interactive online exercises that</Heading>
          <Heading>make the knowledge stick.</Heading>
          <Shops>
            {[0, 1, 2, 3, 4].map((n) => (
              <Shop key={n}>amazon</Shop>
            ))}
          </Shops>
        </Card>
        <DotTrail />
      </PageMain>
      <ScrollTrack>
        <Slot $w={15} $h={15}><I w={8} h={5}><path d="M0 5L4 .5L8 5Z" fill="#a3a3a3" /></I></Slot>
        <ScrollThumb />
      </ScrollTrack>
    </Page>
  </Browser>
);

const PhotosWindow = () => (
  <Photos>
    <PhotosBar>
      <GalleryTile>
        <I w={22} h={22}>
          <rect x="1" y="1" width="17.5" height="17.5" rx="4" stroke="#fff" strokeWidth="1.6" />
          <circle cx="13" cy="6.2" r="1.5" fill="#fff" />
          <path d="M3.2 17.2L8.6 11.8C9.4 11 10.2 11 11 11.8L16.4 17.2" stroke="#fff" strokeWidth="1.6" />
          <path d="M20.8 6V15C20.8 18.6 18.8 20.8 15 20.8H6" stroke="#fff" strokeWidth="1.6" />
        </I>
      </GalleryTile>
      <FileName>4th-variables-rules.P...</FileName>
      <Slot $w={60}>
        <I w={26} h={26}>
          <path d="M10 22H4C2.6 22 1.7 21.3 1.7 19.8V4C1.7 2.6 2.6 1.7 4 1.7H19.5C21 1.7 21.8 2.6 21.8 4V9" stroke="#fff" strokeWidth="1.7" />
          <circle cx="15.8" cy="7.6" r="1.5" stroke="#fff" strokeWidth="1.4" />
          <path d="M2.5 21L9.5 13.6C10.6 12.6 11.8 12.6 13 13.8L14.6 15.4" stroke="#fff" strokeWidth="1.7" />
          <path d="M12 25.2L13 20.6L19.3 14.2L22.8 17.8L16.6 24.1Z M20.4 13.2L21.6 12C22.6 11 24 11.2 24.8 12.2C25.6 13.2 25.6 14.6 24.8 15.4L23.9 16.6Z" fill="#fff" />
        </I>
      </Slot>
      <Slot $w={60}>
        <I w={26} h={26}>
          <path d="M1.6 13.4A11.4 11.6 0 1 1 22.4 18.6C21.3 20.5 19.5 22.2 17.2 23.8" stroke="#fff" strokeWidth="1.7" />
          <path d="M17 16.8V24.4H24.2" stroke="#fff" strokeWidth="1.8" />
          <circle cx="13" cy="13" r="2.1" stroke="#fff" strokeWidth="1.7" />
        </I>
      </Slot>
      <Slot $w={60}>
        <I w={22} h={25}>
          <path d="M0 4.5H22M2.8 4.8L4.6 21.6C4.8 23.2 5.6 24 7 24H15C16.4 24 17.2 23.2 17.4 21.6L19.2 4.8M7.6 4.2C7.6 2 9 1 11 1C13 1 14.4 2 14.4 4.2M9 9.5V18.5M13 9.5V18.5" stroke="#fff" strokeWidth="1.8" />
        </I>
      </Slot>
      <Slot $w={60}>
        <I w={26} h={24}>
          <path d="M13 22.5L3.2 12.6C.6 9.8 .6 5.8 3 3.4C5.6 .9 9.4 1 11.8 3.6L13 5L14.2 3.6C16.6 1 20.4 .9 23 3.4C25.4 5.8 25.4 9.8 22.8 12.6Z" stroke="#6f6f6f" strokeWidth="1.6" />
        </I>
      </Slot>
      <Slot $w={59}>
        <I w={24} h={24}>
          <circle cx="12" cy="12" r="10.8" stroke="#fff" strokeWidth="1.6" />
          <path d="M12 10.5V17.5" stroke="#fff" strokeWidth="1.7" />
          <circle cx="12" cy="7.2" r="1.2" fill="#fff" />
        </I>
      </Slot>
      <Slot $w={61}>
        <I w={26} h={24}>
          <path d="M6 17.8H3.4C1.8 17.8 1 16.8 1 15.4V9C1 6.4 2.6 5.2 4.6 5.2H21C23.4 5.2 24.8 6.6 24.8 9V15.4C24.8 16.8 24 17.8 22.4 17.8H20" stroke="#fff" strokeWidth="1.7" />
          <path d="M6 5V3C6 1.6 6.8 1 8 1H18C19.2 1 20 1.6 20 3V5" stroke="#fff" strokeWidth="1.7" />
          <rect x="5.8" y="12.4" width="14.4" height="10.8" rx="1.8" stroke="#fff" strokeWidth="1.7" />
        </I>
      </Slot>
      <Slot $w={60}><CloudIcon w={30} h={23} /></Slot>
      <Slot $w={60}>
        <I w={26} h={28}>
          <defs>
            <linearGradient id="clip" x1="0" y1="0" x2="1" y2="1">
              <stop offset="0" stopColor="#f0a3f5" />
              <stop offset=".5" stopColor="#a465ee" />
              <stop offset="1" stopColor="#4c31f0" />
            </linearGradient>
          </defs>
          <path d="M1 4.4L21.6 .1C22.8 0 23.6 .4 24 1.6V4.4L4 8.2H1Z" fill="#9450d6" />
          <path d="M1 4.4L12 2.2L9 7.2L4 8.2H1Z" fill="#5b3fae" />
          <path d="M1 8.8H25V25.6C25 26.6 24.4 27 23.4 27H1Z" fill="url(#clip)" />
          <path d="M1 20.6H25V25.6C25 26.6 24.4 27 23.4 27H1Z" fill="#5b3df5" opacity=".75" />
          <path d="M9 14.8H25V20.6H9Z" fill="#7c49e6" opacity=".4" />
        </I>
      </Slot>
      <Slot $w={60}>
        <I w={28} h={5}>
          <circle cx="2.5" cy="2.5" r="2" fill="#fff" />
          <circle cx="13.8" cy="2.5" r="2" fill="#fff" />
          <circle cx="25" cy="2.5" r="2" fill="#fff" />
        </I>
      </Slot>
      <PhotoControls>
        <Slot $w={69}><Dash w={15} color="#fff" /></Slot>
        <Slot $w={69}><I w={15} h={15}><rect x=".5" y=".5" width="14" height="14" stroke="#fff" /></I></Slot>
        <Slot $w={69}><XMark s={15} color="#fff" /></Slot>
      </PhotoControls>
    </PhotosBar>
    <Stage><BrowserPicture /></Stage>
    <PhotosFooter>
      <Slot $w={24} $ml={18}>
        <I w={24} h={18}>
          <rect x=".9" y=".9" width="22.2" height="16.2" rx="3" stroke="#fff" strokeWidth="1.6" />
          <path d="M1 12.4H23" stroke="#fff" strokeWidth="1.4" />
          <path d="M4.8 12.6V17M9.4 12.6V17M14.2 12.6V17M19 12.6V17" stroke="#fff" strokeWidth="1.8" />
        </I>
      </Slot>
      <Rule $h={36} $w={2} $ml={21} $color="#3b3b3b" />
      <FooterRight>
        <Label $size={20.2} $mt={2} $ls={-0.1}>62%</Label>
        <Slot $w={22} $ml={31}>
          <I w={22} h={22}>
            <circle cx="9" cy="9" r="8" stroke="#6e6e6e" strokeWidth="1.7" />
            <path d="M5 9H13M14.8 14.8L21.2 21.2" stroke="#6e6e6e" strokeWidth="1.8" />
          </I>
        </Slot>
        <Slot $w={22} $ml={38}>
          <I w={22} h={22}>
            <circle cx="9" cy="9" r="8" stroke="#fff" strokeWidth="1.7" />
            <path d="M5 9H13M9 5V13M14.8 14.8L21.2 21.2" stroke="#fff" strokeWidth="1.8" />
          </I>
        </Slot>
        <Slot $w={24} $ml={37}>
          <I w={24} h={18}>
            <rect x=".9" y=".9" width="22.2" height="16.2" rx="2.4" stroke="#6e6e6e" strokeWidth="1.5" />
            <path d="M4 7V4H7.5M16.5 4H20V7M20 11V14H16.5M7.5 14H4V11" stroke="#6e6e6e" strokeWidth="1.5" />
          </I>
        </Slot>
        <Slot $w={24} $ml={36}>
          <I w={24} h={18}>
            <rect x=".9" y=".9" width="22.2" height="16.2" rx="3" stroke="#fff" strokeWidth="1.7" />
            <path d="M4.6 6.2L7 4.6V13.4M15.4 6.2L17.8 4.6V13.4M12 6V8M12 10.4V12.4" stroke="#fff" strokeWidth="1.8" />
          </I>
        </Slot>
        <Rule $h={36} $w={2} $ml={21} $color="#3b3b3b" />
        <Slot $w={22} $ml={22}>
          <I w={22} h={22}>
            <path d="M1.4 20.6L20.6 1.4M11.5 .9H21.1V10.5M10.5 21.1H.9V11.5" stroke="#fff" strokeWidth="1.7" />
          </I>
        </Slot>
        <Slot $w={19} />
      </FooterRight>
    </PhotosFooter>
  </Photos>
);

/* ---------- taskbar ---------- */
const TaskBar = styled.div`
  height: 60px;
  background: #1f1f1f;
  display: flex;
  align-items: center;
  color: #fff;
`;
const TaskSearch = styled.div`
  width: 432px;
  height: 60px;
  background: #f2f2f2;
  border: 2px solid #c2c2c2;
  display: flex;
  align-items: center;
  justify-content: space-between;
  padding: 0 20px 0 16px;
  color: #2b2b2b;
`;
const SearchHint = styled.div`
  display: flex;
  align-items: center;
`;
const TaskApp = styled.div<{ $w: number; $ml: number; $on?: boolean; $run?: boolean; $split?: boolean }>`
  width: ${(p) => p.$w}px;
  margin-left: ${(p) => p.$ml}px;
  height: 60px;
  padding-top: 3px;
  display: flex;
  flex: none;
  align-items: center;
  justify-content: center;
  background: ${(p) => (p.$on ? "#4d4d4d" : "transparent")};
  border-bottom: 3px solid ${(p) => (p.$run ? "#76b9ed" : "transparent")};
  border-image: ${(p) => (p.$split ? "linear-gradient(90deg,#76b9ed 0 47px,#3f5f78 47px 49px,#5c8bb0 49px) 3" : "none")};
`;
const Clock = styled.div`
  width: 100px;
  margin-left: 8px;
  text-align: center;
  font-size: 17.5px;
  letter-spacing: 0.1px;
  line-height: 28px;
`;
const ClockTime = styled.div`
  letter-spacing: -0.1px;
`;
const Edge2 = styled.div`
  width: 2px;
  height: 60px;
  background: #757575;
  margin-left: 30px;
`;

const CapIcon = () => (
  <I w={86} h={52}>
    <defs>
      <linearGradient id="cap1" x1="0" y1="0" x2="1" y2="1">
        <stop offset="0" stopColor="#44484d" />
        <stop offset=".5" stopColor="#6a6d71" />
        <stop offset="1" stopColor="#2c2f33" />
      </linearGradient>
      <linearGradient id="cap2" x1="0" y1="0" x2="1" y2="0">
        <stop offset="0" stopColor="#1b1d20" />
        <stop offset=".4" stopColor="#45494e" />
        <stop offset="1" stopColor="#222428" />
      </linearGradient>
      <linearGradient id="roll" x1="0" y1="0" x2=".4" y2="1">
        <stop offset="0" stopColor="#f1e9d6" />
        <stop offset=".5" stopColor="#cfc4a8" />
        <stop offset="1" stopColor="#8d8163" />
      </linearGradient>
    </defs>
    <path d="M19 15L54 12L54 26C47 31 27 34 22 29Z" fill="url(#cap2)" />
    <path d="M0 19L31 3.5L69 0L50 16.5Z" fill="url(#cap1)" />
    <path d="M0 19L50 16.5L69 0V2L50 18.8L0 21Z" fill="#232629" />
    <path d="M34 9L18 19V34" stroke="#e4a72a" strokeWidth="1.6" />
    <path d="M16 33H20L22 46H14Z" fill="#c99418" />
    <path d="M28 39L78 19C83 20 86 24 84 29L35 51C29 52 26 46 28 39Z" fill="url(#roll)" />
    <ellipse cx="31" cy="45.5" rx="4" ry="6" fill="#b6a988" transform="rotate(-20 31 45.5)" />
    <ellipse cx="31" cy="45.5" rx="1.8" ry="3.4" fill="#7d7052" transform="rotate(-20 31 45.5)" />
    <path d="M57 28L64 26L68 36L72 41L66 39L65 42L60 38Z" fill="#d6202a" />
    <ellipse cx="62.5" cy="33" rx="3" ry="4.4" fill="#d9b27a" stroke="#8a2620" />
  </I>
);
const EdgeIcon = () => (
  <I w={36} h={36}>
    <defs>
      <linearGradient id="ed1" x1="0" y1="0" x2="1" y2=".5">
        <stop offset="0" stopColor="#2ea9e8" />
        <stop offset=".55" stopColor="#33c2cc" />
        <stop offset="1" stopColor="#68dc4c" />
      </linearGradient>
      <linearGradient id="ed2" x1="0" y1="0" x2=".4" y2="1">
        <stop offset="0" stopColor="#1c9fe4" />
        <stop offset="1" stopColor="#0a6cd2" />
      </linearGradient>
    </defs>
    <path d="M0 17C1 6.5 9 0 18 0C29 0 36 8 36 16C36 21 32.5 24.5 27.5 24.5C24 24.5 21.5 23.5 21.5 22C21.5 20.8 22.8 20 22.8 17.6C22.8 13 17 9.5 11.6 9.5C6.4 9.5 2 12.5 0 17Z" fill="url(#ed1)" />
    <path d="M0 18C1 12.5 6 9.4 11.6 9.4C17.6 9.4 22.8 13 22.8 17.6C20.6 13.6 12.4 14.2 10.8 21C9.4 27.6 14 34 21.5 35.6C10 38 0 30 0 18Z" fill="url(#ed2)" />
    <path d="M15.4 15.4C10 18.6 9.4 27.5 15 32.4C20 36.6 28.4 36 33.2 28.6C33.8 27.6 33 27 32 27.5C25.6 30.8 17.6 28 15 21.6C14.2 19.2 14.3 17.2 15.4 15.4Z" fill="#124f9c" />
  </I>
);
const TaskExplorerIcon = () => (
  <I w={32} h={28}>
    <path d="M0 2C0 1 .7 .3 1.6 .3H12L15.5 3H0Z M0 2H14V8H0Z" fill="#dd9a06" />
    <path d="M0 5H13L16 2.4H30.4C31.4 2.4 32 3 32 4V24C32 25 31.4 25.6 30.4 25.6H1.6C.6 25.6 0 25 0 24Z" fill="#fbcf5c" />
    <path d="M5.4 27V17C5.4 15.4 6.4 14.4 8 14.4H24C25.6 14.4 26.6 15.4 26.6 17V27H21V19.4H11V27Z" fill="#3c93dc" />
  </I>
);
const StoreIcon = () => (
  <I w={36} h={35}>
    <path d="M9.2 8V2.2C9.2 1.4 9.6 1 10.4 1H25.6C26.4 1 26.8 1.4 26.8 2.2V8" stroke="#24b4ee" strokeWidth="1.9" />
    <path d="M.5 5.6C.5 4.8 1 4.4 1.8 4.4H34.2C35 4.4 35.5 4.8 35.5 5.6V31C35.5 33.4 33.8 35 31.4 35H4.6C2.2 35 .5 33.4 .5 31Z" fill="#f3f3f3" />
    <path d="M9.2 7V4.4M26.8 7V4.4" stroke="#1c8fd4" strokeWidth="1.9" />
    <rect x="10.4" y="12.2" width="7.2" height="7.2" fill="#f25022" />
    <rect x="18.6" y="12.2" width="7.2" height="7.2" fill="#7fba00" />
    <rect x="10.4" y="20.2" width="7.2" height="7.2" fill="#00a4ef" />
    <rect x="18.6" y="20.2" width="7.2" height="7.2" fill="#ffb900" />
  </I>
);
const MailIcon = () => (
  <I w={36} h={33}>
    <path d="M0 10.6L16.6 .6C17.6 .1 18.4 .1 19.4 .6L36 10.6L30 17H6Z" fill="#0b5cad" />
    <path d="M3.5 10.4H32.5L18 22Z" fill="#f4f4f4" />
    <path d="M0 10.6L36 33H1.4C.6 33 0 32.4 0 31.6Z" fill="#22a3ea" />
    <path d="M36 10.6L0 33H34.6C35.4 33 36 32.4 36 31.6Z" fill="#37c0f3" />
    <path d="M0 33L18 21.4L36 33Z" fill="#1792e0" />
  </I>
);
const ChromeIcon = () => (
  <I w={36} h={36}>
    <circle cx="18" cy="18" r="18" fill="#fbc116" />
    <path d="M2.4 9C5.5 3.6 11.4 0 18 0C24.6 0 30.5 3.6 33.6 9H18A9 9 0 0 0 10.2 22.5Z" fill="#e33b2e" />
    <path d="M2.4 9A18 18 0 0 0 18 36L25.8 22.5A9 9 0 0 1 10.2 22.5Z" fill="#229342" />
    <circle cx="18" cy="18" r="8.8" fill="#fff" />
    <circle cx="18" cy="18" r="7" fill="#2f7bf0" />
  </I>
);

const Tray = () => (
  <>
    <Slot $w={18} $ml={39}><I w={18} h={10}><path d="M.7 9.3L9 1L17.3 9.3" stroke="#fff" strokeWidth="1.4" /></I></Slot>
    <Slot $w={24} $ml={15}>
      <I w={24} h={24}>
        <circle cx="12" cy="12" r="12" fill="#fbdc21" />
        <path d="M4 3.2C10 -2 19 .5 22.4 6.5C19 4 14 7.6 4 3.2ZM20 20.8C14 26 5 23.5 1.6 17.5C5 20 10 16.4 20 20.8Z" fill="#2e9a34" />
        <path d="M12 6.4V17.6M6.4 12H17.6" stroke="#2b9b2f" strokeWidth="4" />
      </I>
    </Slot>
    <Slot $w={24} $ml={12}>
      <I w={25} h={21}>
        <path d="M5 13.5C-1.5 13.5 -1 5.6 5 5.4C6 -.6 15 -1.6 17.4 4.4L19 13.5Z" fill="#a9a9a9" />
        <path d="M2 12C4 6 9 7 13 13.5H4Z" fill="#ececec" />
        <circle cx="17.4" cy="13.6" r="6.8" fill="#5ecbff" />
        <path d="M17.4 12.4V17M17.4 9.6V11" stroke="#0a3a5a" strokeWidth="2" />
      </I>
    </Slot>
    <Slot $w={16} $ml={17}>
      <I w={16} h={22}>
        <rect x=".7" y="5.7" width="10" height="10.6" rx="2" stroke="#fff" strokeWidth="1.2" />
        <path d="M11 10L15.3 6.5V15.5L11 12M2 2.6C5 .2 10.5 .2 13.5 2.6M2 19.4C5 21.8 10.5 21.8 13.5 19.4" stroke="#fff" strokeWidth="1.2" />
      </I>
    </Slot>
    <Slot $w={23} $ml={16}>
      <I w={23} h={14}>
        <rect x=".6" y=".9" width="20.6" height="12" stroke="#fff" strokeWidth="1.2" />
        <path d="M2.4 2.7H12V11.2H2.4Z" fill="#fff" />
        <path d="M22.2 5V9" stroke="#fff" strokeWidth="1.4" />
      </I>
    </Slot>
    <Slot $w={20} $ml={15}>
      <I w={20} h={20}>
        <path d="M1 19A18 18 0 0 1 19 1.2" stroke="#e8e8e8" strokeWidth="1.2" />
        <path d="M5 19A14 14 0 0 1 19 5.8M9 19A10 10 0 0 1 19 10M13 19A6 6 0 0 1 19 14" stroke="#cfcfcf" strokeWidth="1.3" />
        <circle cx="17" cy="17.4" r="1.8" fill="#fff" />
      </I>
    </Slot>
    <Slot $w={24} $ml={13}>
      <I w={24} h={20}>
        <path d="M.8 6.4H4.6L9.4 1.2V18.8L4.6 13.6H.8Z" stroke="#fff" strokeWidth="1.3" />
        <path d="M12.6 7C14 8.6 14 11.4 12.6 13M16 4.4C18.6 7.4 18.6 12.6 16 15.6M19.4 1.8C23.4 6.4 23.4 13.6 19.4 18.2" stroke="#fff" strokeWidth="1.2" />
      </I>
    </Slot>
  </>
);

const TaskbarView = () => (
  <TaskBar>
    <Slot $w={72}>
      <I w={24} h={24}>
        <path d="M0 3.4L10.6 1.9V11.3H0ZM11.6 1.8L24 0V11.3H11.6ZM0 12.5H10.6V22L0 20.6ZM11.6 12.5H24V24L11.6 22.2Z" fill="#fff" />
      </I>
    </Slot>
    <TaskSearch>
      <SearchHint>
        <I w={24} h={25}>
          <ellipse cx="15.6" cy="8.6" rx="7.6" ry="7.8" stroke="#111" strokeWidth="1.8" />
          <path d="M10.2 14.2L.8 24" stroke="#111" strokeWidth="1.9" />
        </I>
        <Label $size={21.4} $ls={0.05} $mt={2} $ml={18}>Type here to search</Label>
      </SearchHint>
      <CapIcon />
    </TaskSearch>
    <Slot $w={24} $ml={24}>
      <I w={24} h={27}>
        <path d="M1 0V4.5H16V0M1 27V22.5H16V27" stroke="#fff" strokeWidth="1.3" />
        <rect x="1" y="7.4" width="14.8" height="12" stroke="#fff" strokeWidth="1.3" />
        <path d="M22.4 0V7M22.4 13V27" stroke="#fff" strokeWidth="1.3" />
        <rect x="20.8" y="8.6" width="3.2" height="3.2" fill="#fff" />
      </I>
    </Slot>
    <TaskApp $w={36} $ml={47}><EdgeIcon /></TaskApp>
    <TaskApp $w={61} $ml={27} $run $split><TaskExplorerIcon /></TaskApp>
    <TaskApp $w={36} $ml={26}><StoreIcon /></TaskApp>
    <TaskApp $w={36} $ml={39}><MailIcon /></TaskApp>
    <TaskApp $w={61} $ml={27} $run><ChromeIcon /></TaskApp>
    <TaskApp $w={73} $ml={26} $run $on><PhotoGlyph s={32} id="tbp" /></TaskApp>
    <Slot $w={36} $ml={258}>
      <I w={36} h={31}>
        <defs>
          <linearGradient id="sun" x1="0" y1="0" x2="0" y2="1">
            <stop offset="0" stopColor="#ffc21a" />
            <stop offset="1" stopColor="#ee6a0e" />
          </linearGradient>
        </defs>
        <circle cx="18" cy="15.5" r="15.3" fill="url(#sun)" />
        <path d="M16 6.5H34M1 13H31M6 18.6H33M1 24.4H21" stroke="#ffe3a0" strokeWidth="2.6" strokeLinecap="round" />
      </I>
    </Slot>
    <Label $size={19.5} $mt={2} $ls={-0.2} $ml={12}>35°C</Label>
    <Label $size={19.5} $mt={2} $ls={-0.1} $ml={14}>Haze</Label>
    <Tray />
    <Clock>
      <ClockTime>10:25 PM</ClockTime>
      <div>5/22/2024</div>
    </Clock>
    <Slot $w={24} $ml={20}>
      <I w={24} h={24}>
        <path d="M.7 .7H23.3V18.2H15.4L11.4 22.8L7.2 18.2H.7Z" stroke="#fff" strokeWidth="1.4" />
      </I>
    </Slot>
    <Edge2 />
  </TaskBar>
);

export default function App() {
  return (
    <Desktop>
      <Global />
      <ExplorerWindow />
      <TaskbarView />
      <PropertiesDialog />
      <PhotosWindow />
    </Desktop>
  );
}
